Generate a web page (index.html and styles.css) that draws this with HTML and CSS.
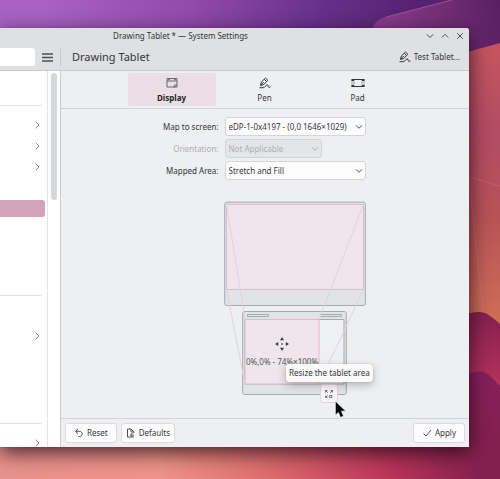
FILE: index.html
```html
<!DOCTYPE html>
<html lang="en">
<head>
<meta charset="utf-8">
<title>Drawing Tablet — System Settings</title>
<link rel="stylesheet" href="styles.css">
</head>
<body>
<svg class="wallpaper" viewBox="0 0 500 479" preserveAspectRatio="none" aria-hidden="true">
  <defs>
    <linearGradient id="sky" gradientUnits="userSpaceOnUse" x1="60" y1="-40" x2="400" y2="60">
      <stop offset="0" stop-color="#a661c2"/><stop offset=".4" stop-color="#9149aa"/><stop offset=".75" stop-color="#66308a"/><stop offset="1" stop-color="#542270"/>
    </linearGradient>
    <linearGradient id="ridge" gradientUnits="userSpaceOnUse" x1="370" y1="30" x2="500" y2="10">
      <stop offset="0" stop-color="#8d3f92"/><stop offset=".6" stop-color="#702d74"/><stop offset="1" stop-color="#5a1f62"/>
    </linearGradient>
    <linearGradient id="dusk" x1="0" y1="0" x2="0" y2="1">
      <stop offset="0" stop-color="#c6555f"/><stop offset=".3" stop-color="#b24c64"/><stop offset=".6" stop-color="#b85157"/><stop offset="1" stop-color="#cf7057"/>
    </linearGradient>
    <linearGradient id="wave" x1="0" y1="0" x2="0" y2="1">
      <stop offset="0" stop-color="#83204f"/><stop offset="1" stop-color="#b5335c"/>
    </linearGradient>
    <linearGradient id="wave2" x1="0" y1="0" x2="0" y2="1">
      <stop offset="0" stop-color="#85205a"/><stop offset="1" stop-color="#84204f"/>
    </linearGradient>
    <linearGradient id="sand" x1="0" y1="0" x2="1" y2="0">
      <stop offset="0" stop-color="#e9918d"/><stop offset=".32" stop-color="#ee9488"/><stop offset=".52" stop-color="#de706e"/><stop offset=".78" stop-color="#b93459"/><stop offset=".96" stop-color="#84204f"/>
    </linearGradient>
  </defs>
  <rect width="500" height="479" fill="url(#sky)"/>
  <path d="M370 40Q371 20 386 17L452 0H500V70H370Z" fill="url(#ridge)"/>
  <path d="M386 17L452 0" stroke="#a84b91" fill="none"/>
  <path d="M460 54L500 43V330H460Z" fill="url(#dusk)"/>
  <path d="M469 177L500 186M469 177L483 312" stroke="#d58790" stroke-opacity=".3" fill="none"/>
  <rect y="430" width="500" height="49" fill="url(#sand)"/>
  <path d="M460 316Q480 309 487 314Q491 316 500 324V385H460Z" fill="url(#wave)"/>
  <path d="M460 376Q479 369 486 373Q490 375 500 386V446H460Z" fill="url(#wave2)"/>
</svg>

<main class="window">
  <header class="header">
    <div class="titlebar">
      <span class="caption">Drawing Tablet * — System Settings</span>
      <div class="controls">
        <button aria-label="Minimize"><svg width="8" height="8" viewBox="0 0 8 8"><path d="M.8 2.300L4 5.500l3.200-3.200"/></svg></button>
        <button aria-label="Maximize"><svg width="8" height="8" viewBox="0 0 8 8"><path d="M.8 5.500L4 2.300l3.200 3.200"/></svg></button>
        <button aria-label="Close"><svg width="8" height="8" viewBox="0 0 8 8"><path d="M1.200 1.200l5.600 5.600M6.800 1.200L1.200 6.800"/></svg></button>
      </div>
    </div>
    <div class="toolbar">
      <input class="search" type="search" aria-label="Search">
      <button class="menu" aria-label="Menu"><svg width="11" height="9" viewBox="0 0 11 9"><path d="M0 1h11M0 4.500h11M0 8h11"/></svg></button>
      <h1>Drawing Tablet</h1>
      <button class="test"><svg width="12" height="12" viewBox="0 0 12 12"><use href="#pen"/></svg>Test Tablet...</button>
    </div>
  </header>

  <div class="body">
    <nav class="sidebar" aria-label="Categories">
      <div class="list">
        <div class="group first"></div>
        <div class="group second">
          <a href="#" aria-label="Open"><svg width="5" height="8" viewBox="0 0 5 8"><path d="M.7.700L4 4 .7 7.300"/></svg></a>
          <a href="#" aria-label="Open"><svg width="5" height="8" viewBox="0 0 5 8"><path d="M.7.700L4 4 .7 7.300"/></svg></a>
          <a href="#" aria-label="Open"><svg width="5" height="8" viewBox="0 0 5 8"><path d="M.7.700L4 4 .7 7.300"/></svg></a>
          <a href="#" class="selected" aria-label="Drawing Tablet"></a>
        </div>
        <div class="group third">
          <a href="#" aria-label="Open"><svg width="5" height="8" viewBox="0 0 5 8"><path d="M.7.700L4 4 .7 7.300"/></svg></a>
        </div>
        <div class="group fourth">
          <a href="#" aria-label="Open"><svg width="5" height="8" viewBox="0 0 5 8"><path d="M.7.700L4 4 .7 7.300"/></svg></a>
        </div>
      </div>
      <div class="scroll"><div class="thumb"></div></div>
    </nav>

    <section class="page">
      <div class="tabs" role="tablist">
        <button class="tab active" role="tab" aria-selected="true">
          <svg class="soft" width="12" height="12" viewBox="0 0 12 12"><path d="M1 1.500h10v8.500h-10zM1 4h10M2 2.700h2M8 2.700h2"/><path d="M11 7.500L8.300 10.500V8h2.500" stroke-width=".8"/></svg>
          Display
        </button>
        <button class="tab" role="tab" aria-selected="false">
          <svg width="12" height="12" viewBox="0 0 12 12">
            <g id="pen" fill="none" stroke="#33373b" stroke-linejoin="round">
              <path d="M1.500 8.500l.8-3.500L6.500 1l2.300 2.200-4 4.300z"/><path d="M5.200 2.200l2.300 2.300M2 8l2.700-3"/>
              <path d="M.500 10.700h3.800c2 0 2.200-2.800 4-2.800 1.500 0 .2 2 1.500 2.400.7.200 1.300 0 1.700-.5"/>
            </g>
          </svg>
          Pen
        </button>
        <button class="tab" role="tab" aria-selected="false">
          <svg class="pad" width="14" height="12" viewBox="0 0 14 12"><path d="M1 2.500h12M1 9.500h12" stroke="#33373b"/><path d="M1 2v8M13 2v8M3 3v6M11 3v6" stroke="#8a8d90" stroke-width=".8"/><path d="M.500 2H3v2H.500zM11 2h2.500v2H11zM.500 8H3v2H.500zM11 8h2.500v2H11z" fill="#33373b" stroke="none"/></svg>
          Pad
        </button>
      </div>

      <div class="content">
        <form class="form">
          <label for="screen">Map to screen:</label>
          <div class="combo"><select id="screen"><option>eDP-1-0x4197 - (0,0 1646×1029)</option></select><svg width="8" height="6" viewBox="0 0 8 6"><path d="M1 1.300l3 3 3-3"/></svg></div>
          <label for="orient" class="off">Orientation:</label>
          <div class="combo short off"><select id="orient" disabled><option>Not Applicable</option></select><svg width="8" height="6" viewBox="0 0 8 6"><path d="M1 1.300l3 3 3-3"/></svg></div>
          <label for="area">Mapped Area:</label>
          <div class="combo"><select id="area"><option>Stretch and Fill</option></select><svg width="8" height="6" viewBox="0 0 8 6"><path d="M1 1.300l3 3 3-3"/></svg></div>
        </form>

        <div class="mapping">
          <svg class="diagram" width="142" height="195" viewBox="0 0 142 195" role="img" aria-label="Tablet area mapping">
            <g fill="#e0e4e5" stroke="#a1abb4">
              <rect x=".7" y="1.200" width="140.600" height="103.300" rx="2"/>
              <rect x="18.700" y="110.500" width="103.600" height="83" rx="2"/>
              <path d="M23.500 113.500h21v2h-21zM96.500 113.500h21v2h-21z"/>
              <path d="M21 118.500h99v64.500h-99z" fill="#eef0f2"/>
            </g>
            <g fill="#efe5eb" stroke="#dcbbcc">
              <rect x="2.500" y="3.500" width="137" height="85"/>
              <rect x="21" y="118.500" width="74" height="64.500"/>
            </g>
            <path d="M2.500 3.500L21 118.500M139.500 3.500L95 118.500M2.500 88.500L21 183M139.500 88.500L95 183" fill="none" stroke="#e6d1da"/>
            <g fill="#3b3e42"><path d="M58 136l2 3.200h-4zM58 150l2-3.200h-4zM51 143l3.200-2v4zM65 143l-3.200-2v4zM57.300 142.300h1.500v1.500h-1.500z"/></g>
            <text x="58" y="164" text-anchor="middle">0%,0% - 74%×100%</text>
          </svg>
          <button class="resize" aria-label="Resize the tablet area"><svg class="soft" width="8" height="8" viewBox="0 0 8 8"><path d="M.5 2.500v-2h2M5.500.500h2v2M.5 5.500v2h2M.5.500l2.300 2.300M7.500.500L5.200 2.800M.5 7.500l2.300-2.300M4.500 5.500h2.500v2h-2.500z" stroke-width=".9"/></svg></button>
          <div class="tooltip" role="tooltip">Resize the tablet area</div>
          <svg class="cursor" width="13" height="19" viewBox="0 0 13 19" aria-hidden="true"><path d="M1.300 1v14.200l3-2.700 2.300 5 3-1.400-2.200-4.900h4.400z" fill="#000" stroke="#fff" stroke-width=".7"/></svg>
        </div>
      </div>

      <footer class="footer">
        <button><svg width="10" height="10" viewBox="0 0 10 10"><path d="M4 1L1.500 3.300 4 5.700M1.500 3.300h3.700c4 0 4 5.200 0 5.200h-.7"/></svg>Reset</button>
        <button><svg width="10" height="10" viewBox="0 0 10 10"><path d="M8 9H1.500V1H5l3 3v1M5 1v3h3M6.500 5L4.500 7l2 2M4.500 7H8"/></svg>Defaults</button>
        <button class="apply"><svg width="10" height="10" viewBox="0 0 10 10"><path d="M1.500 5.500L4 8l5-6"/></svg>Apply</button>
      </footer>
    </section>
  </div>
</main>
</body>
</html>
```
FILE: styles.css
```css
* { box-sizing: border-box; }

body {
  margin: 0;
  height: 100vh;
  display: flex;
  padding: 28px 31px 32px 0;
  overflow: hidden;
  background: #84204f;
  color: #33373b;
  font: 8px/12px "Noto Sans", sans-serif;
}

button, select, input {
  font: inherit;
  color: inherit;
  border: 0;
  margin: 0;
  padding: 0;
  background: none;
}

button {
  display: flex;
  align-items: center;
  justify-content: center;
}

button svg, a svg, .combo svg {
  fill: none;
  stroke: #4c5054;
}

svg { display: block; flex: none; }

.wallpaper {
  position: absolute;
  inset: 0;
  width: 100%;
  height: 100%;
  z-index: -1;
}

.window {
  flex: 1;
  min-width: 0;
  display: flex;
  flex-direction: column;
  background: #eeeff1;
  border-radius: 0 3px 0 0;
  box-shadow: 0 0 1px rgba(70, 60, 75, .8), 0 6px 20px rgba(20, 0, 15, .75);
}

.header {
  background: #dee0e2;
  border-bottom: 1px solid #c6c9cd;
  border-radius: 0 3px 0 0;
}

.titlebar {
  display: grid;
  grid-template-columns: 1fr;
  align-items: center;
  height: 16px;
}

.caption, .controls { grid-area: 1 / 1; }

.caption {
  text-align: center;
  padding-right: 108px;
}

.controls {
  justify-self: end;
  display: flex;
  gap: 7px;
  padding-right: 5px;
}

.toolbar {
  display: flex;
  align-items: center;
  height: 26px;
}

.search {
  width: 35px;
  height: 18px;
  background: #fff;
  border-radius: 0 3px 3px 0;
}

.menu {
  width: 26px;
  height: 17px;
  border-right: 1px solid #c6c9cd;
}

.menu svg { stroke-width: 1.4; }

h1 {
  margin: 0 auto 0 11px;
  font-size: 11px;
  line-height: 16px;
  font-weight: 400;
}

.test { gap: 3px; padding-right: 9px; }

.body { flex: 1; display: flex; min-height: 0; }

.sidebar {
  flex: none;
  width: 61px;
  display: flex;
  overflow: hidden;
  background: #fff;
  border-right: 1px solid #c9ccd0;
}

.list {
  flex: 1;
  border-right: 1px solid #e2e3e5;
}

.group { margin-right: 5px; border-bottom: 1px solid #e0e1e3; }
.first { height: 35px; }
.second { height: 190px; padding-top: 8px; }
.third { height: 128px; padding-top: 29px; }
.fourth { border: 0; padding-top: 8px; }

.list a {
  display: flex;
  justify-content: flex-end;
  align-items: center;
  height: 21px;
  padding-right: 2px;
}

.list svg { stroke: #85878a; }

.list .selected {
  height: 17px;
  margin: 23px -3px 0 0;
  background: #d4a3bb;
  border-radius: 0 3px 3px 0;
}

.scroll { width: 12px; padding: 2px 3px; }
.thumb { height: 127px; background: #d5d8d8; border-radius: 3px; }

.page {
  flex: 1;
  min-width: 0;
  display: flex;
  flex-direction: column;
}

.tabs {
  display: flex;
  justify-content: center;
  gap: 5px;
  height: 38px;
  padding: 2px 1px 2px 0;
  border-bottom: 1px solid #d1d3d6;
}

.tab {
  width: 88px;
  padding-top: 2px;
  flex-direction: column;
  gap: 3px;
  border-radius: 3px;
}

.active { background: #ebdfe5; font-weight: 700; color: #232629; }

.tab .soft, .resize .soft { stroke: #65696d; }

.content {
  flex: 1;
  display: flex;
  flex-direction: column;
  align-items: center;
  padding: 8px 0 0;
}

.form {
  display: grid;
  grid-template-columns: 55px 141px;
  align-items: center;
  gap: 3px 6px;
  padding-right: 1px;
}

.form label {
  justify-self: end;
  white-space: nowrap;
}

.combo {
  display: grid;
  align-items: center;
  height: 19px;
  background: #fcfcfc;
  border: 1px solid #d3d5d8;
  border-radius: 3px;
}

.combo select, .combo svg { grid-area: 1 / 1; }

.combo select {
  appearance: none;
  width: 100%;
  height: 17px;
  padding-left: 3px;
}

.combo svg {
  justify-self: end;
  margin-right: 2px;
  pointer-events: none;
}

.short { width: 97px; }
.off { color: #adb0b3; }
.combo.off { background: #e3e5e7; }
.off select { opacity: 1; }
.off svg { stroke: #adb0b3; }

.mapping {
  position: relative;
  margin-top: 21px;
  margin-left: 60px;
}

.diagram text { font-size: 8px; fill: #55595d; }

.resize {
  position: absolute;
  left: 96px;
  top: 183px;
  width: 18px;
  height: 19px;
  background: #f6f5f7;
  border: 1px solid #e8cfdb;
  border-radius: 3px;
}

.tooltip {
  position: absolute;
  left: 62px;
  top: 163px;
  padding: 2px 3px;
  line-height: 14px;
  white-space: nowrap;
  background: #f9f9fa;
  border-radius: 3px;
  box-shadow: 0 0 1px rgba(0, 0, 0, .4), 0 3px 8px rgba(0, 0, 0, .25);
}

.cursor { position: absolute; left: 110px; top: 199px; }

.footer {
  display: flex;
  gap: 4px;
  padding: 4px;
  border-top: 1px solid #d1d3d6;
}

.footer button {
  gap: 3px;
  height: 20px;
  padding: 0 8px;
  background: #fcfcfc;
  border: 1px solid #d9dbde;
  border-radius: 3px;
}

.footer button + button { padding: 0 4px; }
.footer .apply { margin-left: auto; }
.footer button.apply { padding: 0 8px; }
```
